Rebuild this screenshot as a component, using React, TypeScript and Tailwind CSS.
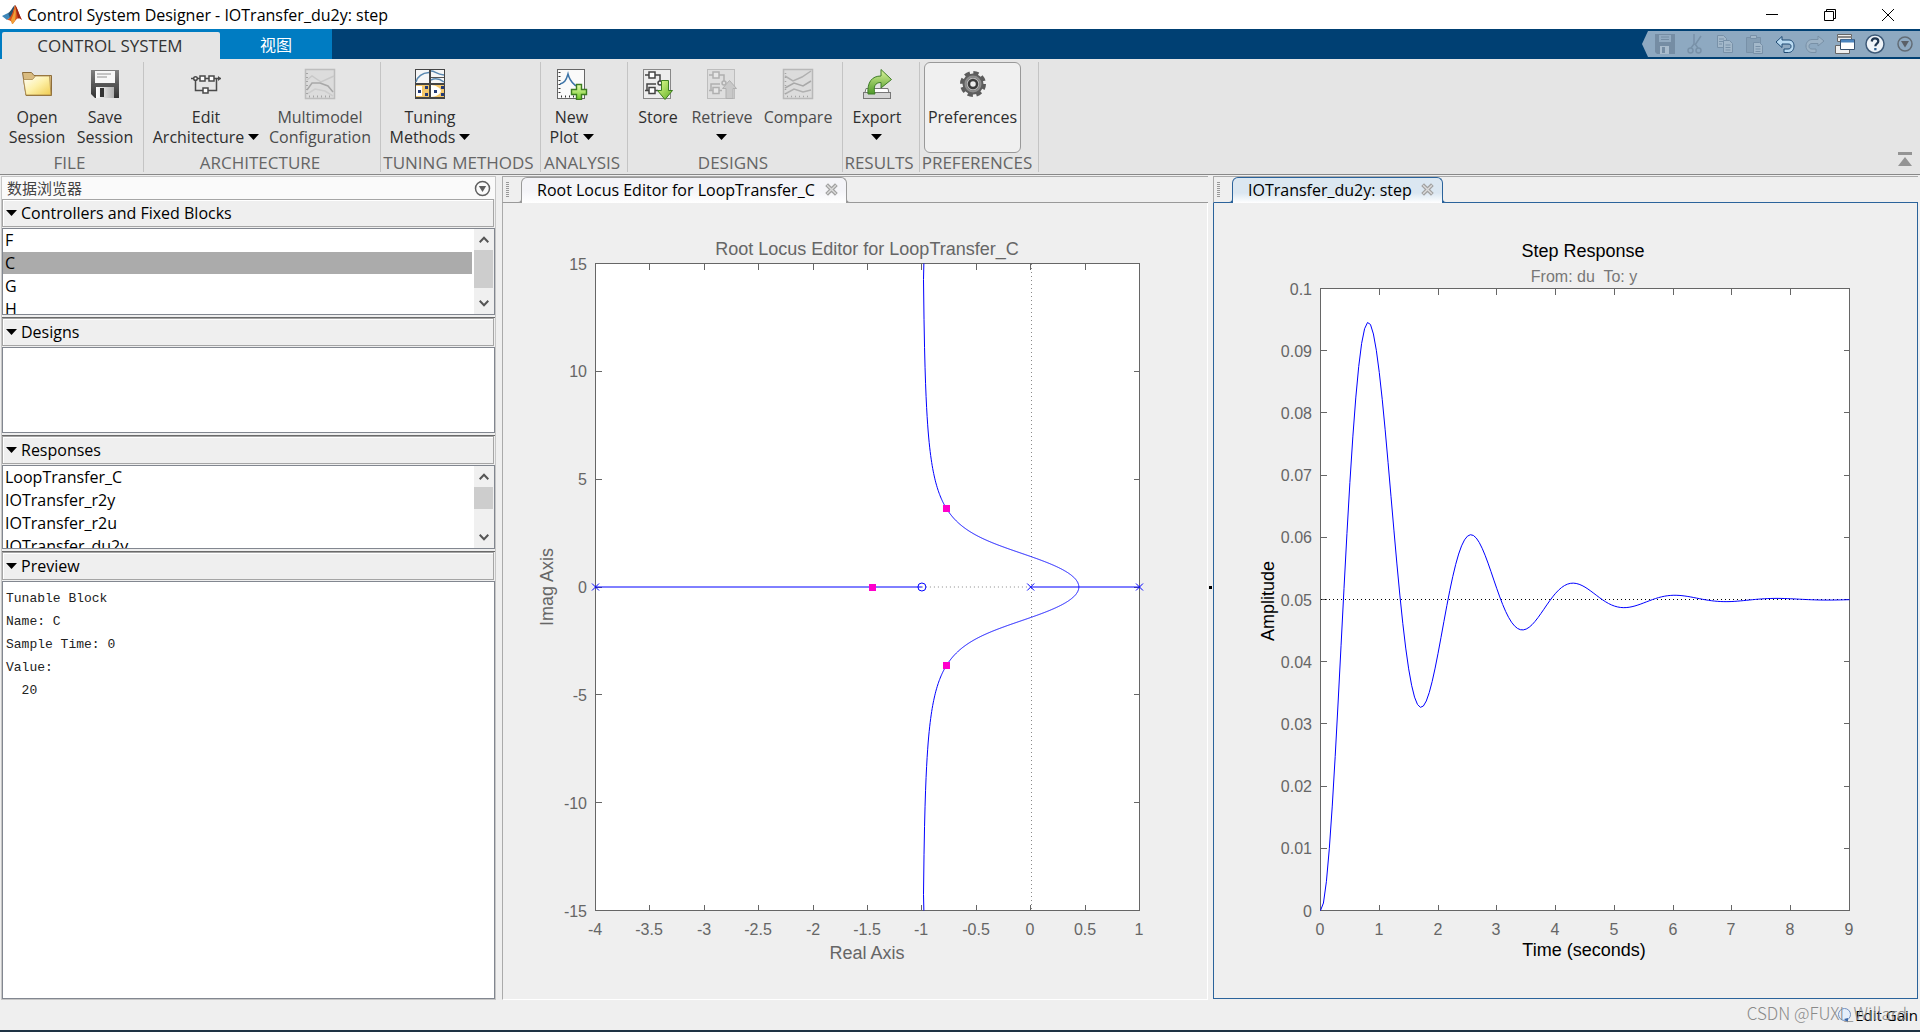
import React from 'react';

/* ---------- ribbon icons ---------- */

const FolderIcon = () => (
  <svg width="32" height="32" viewBox="0 0 32 32">
    <defs>
      <linearGradient id="folder" x1="0" y1="0" x2="1" y2="1">
        <stop offset="0" stopColor="#ffffff" />
        <stop offset="0.5" stopColor="#fdf0a8" />
        <stop offset="1" stopColor="#f0cc50" />
      </linearGradient>
    </defs>
    <path d="M1.500 4.500h9l2.500 3h17.500v20H5z" fill="#d9bb80" stroke="#8d6d3b" />
    <path d="M2.500 11.500h9l3-3.500h14l1.500 19H5z" fill="url(#folder)" stroke="#a8884a" strokeWidth="0.800" />
  </svg>
);

const DisketteIcon = () => (
  <svg width="32" height="32" viewBox="0 0 32 32">
    <defs>
      <linearGradient id="disk" x1="0" y1="0" x2="0" y2="1">
        <stop offset="0" stopColor="#808080" />
        <stop offset="1" stopColor="#333333" />
      </linearGradient>
      <linearGradient id="diskslot" x1="0" y1="0" x2="1" y2="0">
        <stop offset="0" stopColor="#ffffff" />
        <stop offset="1" stopColor="#b0b0b0" />
      </linearGradient>
    </defs>
    <path d="M2 2h28v28H6l-4-4z" fill="url(#disk)" />
    <rect x="6" y="3" width="20" height="12" fill="#f7f7f7" />
    <path d="M8 6h14M8 9h10" stroke="#909090" />
    <rect x="7" y="19" width="18" height="11" fill="url(#diskslot)" />
    <rect x="11" y="20" width="4" height="9" fill="#333" />
    <path d="M2 16.500h28" stroke="#555" />
  </svg>
);

const ArchitectureIcon = () => (
  <svg width="32" height="32" viewBox="0 0 32 32" fill="none" stroke="#4a4a4a" strokeWidth="1.500">
    <path d="M1 10.500h9M15 10.500h4M24 10.500h7M5.500 10.500v12h8M18 22.500h8.500v-12" />
    <rect x="10" y="8" width="5" height="5" fill="#fff" />
    <rect x="19" y="8" width="5" height="5" fill="#fff" />
    <rect x="13" y="20" width="5" height="5" fill="#fff" />
    <circle cx="5.500" cy="10.500" r="1.800" fill="#fff" />
    <path d="M28 8l3 2.500-3 2.500z" fill="#4a4a4a" stroke="none" />
  </svg>
);

const MultimodelIcon = () => (
  <svg width="32" height="32" viewBox="0 0 32 32" fill="none">
    <rect x="1.500" y="1.500" width="29" height="29" fill="#dcdcdc" stroke="#bdbdbd" strokeWidth="1.500" />
    <path d="M3 12l5-4 9 6 13-6" stroke="#c8c8c8" strokeWidth="1.500" />
    <path d="M3 22l5-7h8l8 3 5 6" stroke="#a8a8a8" strokeWidth="1.500" />
    <path d="M3 26l8-5 10 2 8 5" stroke="#cdcdcd" strokeWidth="1.500" />
    <path d="M5 28.500h24" stroke="#a5a5a5" strokeWidth="2" strokeDasharray="1 3" />
    <path d="M3 5v22" stroke="#a5a5a5" strokeWidth="2" strokeDasharray="1 3" />
  </svg>
);

const TuningIcon = () => (
  <svg width="32" height="32" viewBox="0 0 32 32" fill="none">
    <rect x="1" y="1" width="30" height="30" fill="#444" />
    <rect x="2" y="2" width="13" height="13" fill="#f6f6f6" />
    <rect x="17" y="2" width="13" height="13" fill="#f6f6f6" />
    <rect x="2" y="17" width="13" height="12" fill="#f4c76a" />
    <rect x="17" y="17" width="13" height="12" fill="#f4c76a" />
    <path d="M2 14C4 7 9 5 15 4.500" stroke="#5a88b0" strokeWidth="1.500" />
    <path d="M17 3c4 0 5 3 13 4M17 12c4-2 9-1 13 2" stroke="#5a88b0" strokeWidth="1.500" />
    <path d="M17 9.500h13" stroke="#555" />
    <rect x="2" y="18" width="6" height="10" fill="#fff" />
    <path d="M17 17c4 0 10 3 10 6s-6 6-10 6z" fill="#fff" />
    <path d="M4 22h3v3H4zM11 18h3v3h-3zM11 25h3v3h-3zM20 22h3v3h-3zM27 18h3v3h-3zM27 25h3v3h-3z" fill="#233b78" />
  </svg>
);

const NewPlotIcon = () => (
  <svg width="32" height="32" viewBox="0 0 32 32" fill="none">
    <defs>
      <linearGradient id="plus" x1="0" y1="0" x2="0" y2="1">
        <stop offset="0" stopColor="#e9ffb0" />
        <stop offset="1" stopColor="#70c828" />
      </linearGradient>
    </defs>
    <rect x="1.500" y="1.500" width="27" height="29" fill="#fafafa" stroke="#666" />
    <path d="M3.500 4v24M5 28.500h15" stroke="#333" strokeWidth="2" strokeDasharray="1 3" />
    <path d="M4 16c4-1 6-3 8-10 2 8 5 9 8 12" stroke="#3c74a8" strokeWidth="1.500" />
    <path d="M20.500 16.500h5v5h5v5h-5v5h-5v-5h-5v-5h5z" fill="url(#plus)" stroke="#3c7d20" strokeWidth="1.400" />
  </svg>
);

const DesignsIcon = ({ up = false }: { up?: boolean }) => {
  const ink = up ? '#b0b0b0' : '#444';
  return (
    <svg width="32" height="32" viewBox="0 0 32 32" fill="none">
      <defs>
        <linearGradient id="down" x1="0" y1="0" x2="1" y2="1">
          <stop offset="0" stopColor="#e2ff90" />
          <stop offset="1" stopColor="#5fae24" />
        </linearGradient>
      </defs>
      <rect x="1.500" y="1.500" width="27" height="29" fill={up ? '#dedede' : '#ededed'} stroke={up ? '#bdbdbd' : '#888'} />
      <g stroke={ink} strokeWidth="1.500">
        <path d="M3 7h4M13 7h5v6M3 22.500h4M13 22.500h3" />
        <rect x="7" y="4" width="6" height="6" fill={up ? '#e6e6e6' : '#fff'} />
        <rect x="7" y="19.500" width="6" height="6" fill={up ? '#e6e6e6' : '#fff'} />
        <circle cx="18" cy="15" r="2" />
        <path d="M5 22v-6h9" />
      </g>
      {up ? (
        <path d="M23.500 12.500l7 8h-3.500v10h-7v-10h-3.500z" fill="#c9c9c9" stroke="#b0b0b0" />
      ) : (
        <path d="M19.500 12.500h7v10h4l-7.500 9-7.500-9h4z" fill="url(#down)" stroke="#3c7d20" />
      )}
    </svg>
  );
};

const CompareIcon = () => (
  <svg width="32" height="32" viewBox="0 0 32 32" fill="none">
    <rect x="1.500" y="1.500" width="29" height="29" fill="#dcdcdc" stroke="#b8b8b8" strokeWidth="1.500" />
    <path d="M3 8l8 5 9-4 9-6" stroke="#b0b0b0" strokeWidth="1.500" />
    <path d="M3 20l9-5 9 3 8-5" stroke="#a8a8a8" strokeWidth="1.500" />
    <path d="M3 26l9-5 9 3 8-2" stroke="#b0b0b0" strokeWidth="1.500" />
    <path d="M5 28.500h24M3.500 5v22" stroke="#a5a5a5" strokeWidth="1.500" strokeDasharray="1 3" />
  </svg>
);

const ExportIcon = () => (
  <svg width="32" height="32" viewBox="0 0 32 32" fill="none">
    <defs>
      <linearGradient id="export" x1="0" y1="0" x2="0" y2="1">
        <stop offset="0" stopColor="#dcf59c" />
        <stop offset="1" stopColor="#4e9a28" />
      </linearGradient>
    </defs>
    <path d="M5 20.500h22l2 10H2.500z" fill="#ffffff" stroke="#777" />
    <rect x="2.500" y="24.500" width="27" height="6" fill="#d4d4d4" stroke="#777" />
    <path d="M7 26C6 14 11 8 20 8V1.500l10.500 10L20 20v-5.500c-6 0-8 4-6 11.500z" fill="url(#export)" stroke="#3f7d28" />
  </svg>
);

const GearIcon = () => (
  <svg width="32" height="32" viewBox="0 0 32 32" fill="none">
    <circle cx="16" cy="16" r="11" stroke="#5c5c5c" strokeWidth="4" strokeDasharray="5.200 3.440" />
    <circle cx="16" cy="16" r="8.500" fill="#b9b9b9" stroke="#5e5e5e" strokeWidth="4" />
    <circle cx="16" cy="16" r="7.500" stroke="#8d8d8d" strokeWidth="2" />
    <circle cx="16" cy="16" r="4" fill="#ececec" stroke="#3c3c3c" strokeWidth="2.500" />
  </svg>
);

/* ---------- small glyphs ---------- */

const Caret = () => (
  <svg width="11" height="6" viewBox="0 0 11 6" className="shrink-0">
    <path d="M0 0h11L5.500 6z" fill="#000" />
  </svg>
);

const CircleDown = ({ color }: { color: string }) => (
  <svg width="17" height="17" viewBox="0 0 17 17" fill="none">
    <circle cx="8.500" cy="8.500" r="7" stroke={color} strokeWidth="1.500" />
    <path d="M4.800 6h7.400l-3.700 6z" fill={color} />
  </svg>
);

const MatlabLogo = () => (
  <svg width="20" height="20" viewBox="0 0 20 20">
    <path d="M0 11l6-3 3 4-4 3z" fill="#3d86b8" />
    <path d="M6 8c3-1 4-6 7-8l-3 12-2 1z" fill="#27506e" />
    <path d="M13 0c2 2 4 9 7 15-3-3-5-2-7 1-1 1-2 3-3 3 0-3-2-4-5-4 5-3 6-9 8-15z" fill="#d9521c" />
    <path d="M13 0c0 6-2 10-4 15l1 4c1 0 2-2 3-3 1-6 1-11 0-16z" fill="#f0a038" />
    <path d="M13 0c2 2 4 9 7 15-2-2-3-2-4-1.500C15 9 14 4 13 0z" fill="#9c2516" />
  </svg>
);

/* ---------- ribbon ---------- */

type Tool = { label: string[]; icon: React.ReactNode; width: string; menu?: boolean; dim?: boolean; active?: boolean };
type Group = { title: string; width: string; inset?: string; tools: Tool[] };

const groups: Group[] = [
  {
    title: 'FILE',
    width: 'w-36',
    inset: 'pl-[3px]',
    tools: [
      { label: ['Open', 'Session'], icon: <FolderIcon />, width: 'w-[68px]' },
      { label: ['Save', 'Session'], icon: <DisketteIcon />, width: 'w-[68px]' },
    ],
  },
  {
    title: 'ARCHITECTURE',
    width: 'w-[237px]',
    inset: 'pl-[5px]',
    tools: [
      { label: ['Edit', 'Architecture'], icon: <ArchitectureIcon />, width: 'w-[114px]', menu: true },
      { label: ['Multimodel', 'Configuration'], icon: <MultimodelIcon />, width: 'w-[114px]', dim: true },
    ],
  },
  {
    title: 'TUNING METHODS',
    width: 'w-40',
    tools: [{ label: ['Tuning', 'Methods'], icon: <TuningIcon />, width: 'w-[98px]', menu: true }],
  },
  {
    title: 'ANALYSIS',
    width: 'w-[87px]',
    tools: [{ label: ['New', 'Plot'], icon: <NewPlotIcon />, width: 'w-[61px]', menu: true }],
  },
  {
    title: 'DESIGNS',
    width: 'w-[215px]',
    tools: [
      { label: ['Store'], icon: <DesignsIcon />, width: 'w-[60px]' },
      { label: ['Retrieve', ''], icon: <DesignsIcon up />, width: 'w-[68px]', menu: true, dim: true },
      { label: ['Compare'], icon: <CompareIcon />, width: 'w-[84px]', dim: true },
    ],
  },
  {
    title: 'RESULTS',
    width: 'w-[77px]',
    tools: [{ label: ['Export', ''], icon: <ExportIcon />, width: 'w-[68px]', menu: true }],
  },
  {
    title: 'PREFERENCES',
    width: 'w-[119px]',
    inset: 'pl-1',
    tools: [{ label: ['Preferences'], icon: <GearIcon />, width: 'w-[97px]', active: true }],
  },
];

const ToolButton = ({ tool }: { tool: Tool }) => (
  <button
    className={`flex h-[91px] shrink-0 flex-col items-center rounded-md border pt-[5px] text-base leading-5 ${tool.width} ${
      tool.active ? 'border-[#999] bg-[#f0f0f0]' : 'border-transparent'
    } ${tool.dim ? 'text-[#4c4c4c]' : 'text-[#2e2e2e]'}`}
  >
    {tool.icon}
    <span className="mt-[7px] flex flex-col items-center whitespace-nowrap">
      {tool.label.map((line, i) => (
        <span key={i} className="flex h-5 items-center gap-1">
          {line}
          {tool.menu && i === tool.label.length - 1 && <Caret />}
        </span>
      ))}
    </span>
  </button>
);

const Ribbon = () => (
  <div className="flex h-[116px] shrink-0 border-b border-[#888] bg-[#e5e5e5] pt-[3px] pb-0.5">
    {groups.map((g) => (
      <section key={g.title} className={`flex shrink-0 flex-col border-r border-[#c4c4c4] ${g.width}`} aria-label={g.title}>
        <div className={`flex ${g.inset ?? ''}`}>
          {g.tools.map((t) => (
            <ToolButton key={t.label[0] + t.label[1]} tool={t} />
          ))}
        </div>
        <h2 className="pr-1 text-center text-[17px] leading-5 whitespace-nowrap text-[#666]">{g.title}</h2>
      </section>
    ))}
    <button className="mt-auto mr-1.5 mb-1 ml-auto p-0.5" aria-label="Minimize toolstrip">
      <svg width="14" height="14" viewBox="0 0 14 14" fill="#949494">
        <path d="M0 0h14v3H0zM7 5l7 9H0z" />
      </svg>
    </button>
  </div>
);

/* ---------- quick access ---------- */

const quick: { name: string; icon: React.ReactNode }[] = [
  {
    name: 'Save',
    icon: (
      <g>
        <path d="M0 0h20v20H2l-2-2z" fill="#758da4" />
        <path d="M4 1h12v7H4z" fill="#93abc1" />
        <path d="M6 3h8M6 5.500h8" stroke="#758da4" />
        <path d="M5 12h9v8H5z" fill="#a9bccd" />
        <path d="M7 13h3v6H7z" fill="#758da4" />
      </g>
    ),
  },
  {
    name: 'Cut',
    icon: (
      <g stroke="#7891a8" strokeWidth="1.500">
        <path d="M9 0v10l-3 4M16 2l-6 9M10 10l3 4" />
        <circle cx="5.500" cy="16.500" r="2.500" />
        <circle cx="13.500" cy="16.500" r="2.500" />
      </g>
    ),
  },
  {
    name: 'Copy',
    icon: (
      <g fill="#a3b8ca" stroke="#7891a8">
        <path d="M2.500 1.500h6l3 3v9h-9z" />
        <path d="M4 5h5M4 7.500h5M4 10h3" />
        <path d="M8.500 6.500h6l3 3v9h-9z" />
        <path d="M10.500 11h5M10.500 13.500h5M10.500 16h5" />
      </g>
    ),
  },
  {
    name: 'Paste',
    icon: (
      <g fill="#869fb5" stroke="#7891a8">
        <path d="M1.500 3.500h14v15h-14z" />
        <path d="M5.500 1.500h6v3h-6z" fill="#a3b8ca" />
        <path d="M8.500 8.500h6l3 3v8h-9z" fill="#a3b8ca" />
        <path d="M10.500 12.500h5M10.500 15h5M10.500 17.500h5" />
      </g>
    ),
  },
  {
    name: 'Undo',
    icon: (
      <path
        d="M1 8l6-5.500V6h7c3 0 5 2.500 5 6s-2 6.500-5.500 6.500H9V15h4c2 0 3-1 3-2.700S15 10 13 10H7v3.500z"
        fill="#b9daf1"
        stroke="#1f4a73"
      />
    ),
  },
  {
    name: 'Redo',
    icon: (
      <path
        d="M19 7l-6-5v3.500H7C4 5.500 1 8 1 12s3 6.500 6 6.500h4V15H7c-2 0-3-1-3-2.700S5 9.500 7 9.500h6V12z"
        fill="#9db3c6"
        stroke="#7890a6"
      />
    ),
  },
  {
    name: 'Switch windows',
    icon: (
      <g stroke="#666">
        <path d="M2.500 .5h14v7h-14z" fill="#eee" />
        <path d="M.5 11.500h14v8H.5z" fill="#eee" />
        <path d="M2.500 3h14" stroke="#888" strokeWidth="2" />
        <path d="M5.500 5.500h14v10h-14z" fill="#fff" stroke="#36506e" />
        <path d="M6 7h13" stroke="#4b84bd" strokeWidth="3" />
      </g>
    ),
  },
  {
    name: 'Help',
    icon: (
      <g>
        <circle cx="10" cy="10" r="9" fill="#eef3f8" stroke="#3e5a78" strokeWidth="1.500" />
        <path d="M6.700 7.500C7 5 8.500 4.300 10 4.300c2 0 3.300 1.100 3.300 2.900 0 2.500-3 2.300-3 5" stroke="#1f3550" strokeWidth="2.200" />
        <path d="M9.200 14h2.300v2.300H9.200z" fill="#2d5f92" />
      </g>
    ),
  },
  {
    name: 'Toolbar options',
    icon: (
      <g>
        <circle cx="10" cy="10" r="7" stroke="#626c76" strokeWidth="1.500" />
        <path d="M6 7h8l-4 6.500z" fill="#5a6068" />
      </g>
    ),
  },
];

const TabStrip = () => (
  <div className="flex h-[30px] shrink-0 items-stretch bg-[#004073]" role="tablist">
    <div className="flex w-[332px] items-end bg-[#007cc2] pl-0.5">
      <button
        role="tab"
        aria-selected="true"
        className="h-[27px] w-[218px] rounded-t-xs bg-[#e5e5e5] pr-0.5 text-center text-[17px] leading-[27px] text-[#333]"
      >
        CONTROL SYSTEM
      </button>
      <button role="tab" aria-selected="false" className="h-[27px] flex-1 text-center text-base leading-[27px] text-white">
        视图
      </button>
    </div>
    <div className="my-0.5 ml-auto flex bg-[#8ea9c1] pl-2 [clip-path:polygon(6px_0,100%_0,100%_100%,6px_100%,0_50%)]">
      {quick.map((q) => (
        <button key={q.name} aria-label={q.name} className="flex w-[30px] items-center justify-center">
          <svg width="20" height="20" viewBox="0 0 20 20" fill="none">
            {q.icon}
          </svg>
        </button>
      ))}
    </div>
  </div>
);

const TitleBar = () => (
  <header className="flex h-[29px] shrink-0 items-center bg-white pr-[3px] pl-0.5">
    <MatlabLogo />
    <h1 className="ml-[5px] text-base leading-5 text-black">Control System Designer - IOTransfer_du2y: step</h1>
    <div className="ml-auto flex h-full">
      <button aria-label="Minimize" className="flex w-[58px] items-center justify-center">
        <svg width="12" height="12" viewBox="0 0 12 12" stroke="#000" fill="none">
          <path d="M0 5.500h12" />
        </svg>
      </button>
      <button aria-label="Restore" className="flex w-[58px] items-center justify-center">
        <svg width="12" height="12" viewBox="0 0 12 12" stroke="#000" fill="none">
          <path d="M.5 2.500h9v9h-9zM2.500 2.500v-2h9v9h-2" />
        </svg>
      </button>
      <button aria-label="Close" className="flex w-[58px] items-center justify-center">
        <svg width="12" height="12" viewBox="0 0 12 12" stroke="#000" fill="none">
          <path d="M0 0l12 12M12 0L0 12" />
        </svg>
      </button>
    </div>
  </header>
);

/* ---------- data browser ---------- */

const Chevron = ({ down = false }: { down?: boolean }) => (
  <svg width="10" height="7" viewBox="0 0 10 7" fill="none" stroke="#555" strokeWidth="2">
    <path d={down ? 'M.7 .8L5 5.200 9.300 .8' : 'M.7 6.200L5 1.800l4.300 4.400'} />
  </svg>
);

const ScrollBar = ({ thumb }: { thumb: string }) => (
  <div className="ml-0.5 flex w-5 shrink-0 flex-col bg-[#f0f0f0]">
    <button aria-label="Scroll up" className="flex h-[21px] shrink-0 items-center justify-center">
      <Chevron />
    </button>
    <div className={`mr-px bg-[#cdcdcd] ${thumb}`} />
    <button aria-label="Scroll down" className="mt-auto flex h-[21px] shrink-0 items-center justify-center">
      <Chevron down />
    </button>
  </div>
);

const SectionHeader = ({ title }: { title: string }) => (
  <button className="mr-px flex h-7 shrink-0 items-center gap-1 border border-[#a5a5a5] bg-[#efefef] pl-[3px] text-left text-base leading-5 text-black shadow-[inset_1px_1px_0_#fff]">
    <Caret />
    {title}
  </button>
);

const Divider = () => <div className="mt-0.5 h-px shrink-0 bg-[#6a6a6a]" />;

const ItemList = ({ items, selected, label, thumb, height }: { items: string[]; selected?: string; label: string; thumb?: string; height: string }) => (
  <div className={`mt-px flex shrink-0 overflow-hidden border border-[#828790] bg-white ${height}`}>
    <ul role="listbox" aria-label={label} className="min-w-0 flex-1 text-base leading-[23px] text-black">
      {items.map((it) => (
        <li
          key={it}
          role="option"
          aria-selected={it === selected}
          className={`h-[23px] pl-0.5 ${it === selected ? 'border-b border-white bg-[#ababab]' : ''}`}
        >
          {it}
        </li>
      ))}
    </ul>
    {thumb && <ScrollBar thumb={thumb} />}
  </div>
);

const DataBrowser = () => (
  <aside className="ml-px flex w-[495px] shrink-0 flex-col border border-[#c6c6c6]">
    <div className="flex h-[22px] shrink-0 items-center justify-between bg-[#fafafa] pr-1 pl-[5px]">
      <h2 className="text-[15px] leading-5 text-[#444]">数据浏览器</h2>
      <button aria-label="Panel options">
        <CircleDown color="#5f5f5f" />
      </button>
    </div>
    <SectionHeader title="Controllers and Fixed Blocks" />
    <ItemList label="Controllers and Fixed Blocks" items={['F', 'C', 'G', 'H']} selected="C" thumb="h-[38px]" height="h-[87px]" />
    <Divider />
    <SectionHeader title="Designs" />
    <ItemList label="Designs" items={[]} height="h-[86px]" />
    <Divider />
    <SectionHeader title="Responses" />
    <ItemList
      label="Responses"
      items={['LoopTransfer_C', 'IOTransfer_r2y', 'IOTransfer_r2u', 'IOTransfer_du2y']}
      thumb="h-[22px]"
      height="h-[84px]"
    />
    <Divider />
    <SectionHeader title="Preview" />
    <pre className='mt-px flex-1 overflow-hidden border border-[#828790] bg-white pt-[5px] pl-[3px] font-["Liberation_Mono",monospace] text-[13px] leading-[23px] text-[#222]'>
      {'Tunable Block\nName: C\nSample Time: 0\nValue:\n  20'}
    </pre>
  </aside>
);

/* ---------- plots ---------- */

const AXIS = '#666666';
const plotFont = 'font-["Liberation_Sans",Arial,sans-serif]';

type Frame = { x0: number; x1: number; y0: number; y1: number; left: number; right: number; top: number; bottom: number };

const makeScale = (f: Frame) => ({
  sx: (v: number) => f.left + ((v - f.x0) / (f.x1 - f.x0)) * (f.right - f.left),
  sy: (v: number) => f.bottom - ((v - f.y0) / (f.y1 - f.y0)) * (f.bottom - f.top),
});

const Axes = ({ frame, xs, ys }: { frame: Frame; xs: number[]; ys: number[] }) => {
  const { sx, sy } = makeScale(frame);
  const { left, right, top, bottom } = frame;
  const snap = (n: number) => Math.floor(n) + 0.5;
  return (
    <g>
      <g stroke={AXIS} fill="none" shapeRendering="crispEdges">
        <rect x={left} y={top} width={right - left} height={bottom - top} />
        {xs.map((v) => (
          <path key={v} d={`M${snap(sx(v))} ${top}v6M${snap(sx(v))} ${bottom}v-6`} />
        ))}
        {ys.map((v) => (
          <path key={v} d={`M${left} ${snap(sy(v))}h6M${right} ${snap(sy(v))}h-6`} />
        ))}
      </g>
      <g fill={AXIS} fontSize="16">
        {xs.map((v) => (
          <text key={v} x={Math.floor(sx(v))} y={bottom + 24.5} textAnchor="middle">
            {v}
          </text>
        ))}
        {ys.map((v) => (
          <text key={v} x={left - 8.5} y={Math.round(sy(v)) + 6} textAnchor="end">
            {v}
          </text>
        ))}
      </g>
    </g>
  );
};

const toPath = (pts: [number, number][]) => 'M' + pts.map(([x, y]) => `${x.toFixed(2)} ${y.toFixed(2)}`).join('L');

const locusFrame: Frame = { x0: -4, x1: 1, y0: -15, y1: 15, left: 92.5, right: 636.5, top: 60.5, bottom: 707.5 };

/* Complex branch of 1 + K (s + 1) / (s (s - 1) (s + 4)) = 0, parametrised by its real part. */
const imagOf = (a: number) => Math.sqrt(Math.max(0, (4 - 6 * a - 4 * a * a) / (2 + 2 * a) - a * a));

const locusBranch = (() => {
  let lo = 0.3;
  let hi = 0.6;
  for (let i = 0; i < 50; i++) {
    const mid = (lo + hi) / 2;
    if (imagOf(mid) > 0) lo = mid;
    else hi = mid;
  }
  const pts: [number, number][] = [];
  const n = 600;
  for (let i = 0; i <= n; i++) {
    const u = i / n;
    const a = lo - (lo + 0.99) * u * u;
    const b = imagOf(a);
    if (b <= 15) pts.push([a, b]);
  }
  pts.push([-0.982, 15]);
  pts[0] = [lo, 0];
  return pts;
})();

const RootLocusPlot = () => {
  const { sx, sy } = makeScale(locusFrame);
  const upper = toPath(locusBranch.map(([a, b]) => [sx(a), sy(b)]));
  const lower = toPath(locusBranch.map(([a, b]) => [sx(a), sy(-b)]));
  const poles = [-4, 0, 1];
  const closed: [number, number][] = [
    [-1.46, 0],
    [-0.774, 3.65],
    [-0.774, -3.63],
  ];
  return (
    <svg viewBox="0 0 704 796" className={`block h-full w-full ${plotFont}`} role="img" aria-label="Root Locus Editor for LoopTransfer_C">
      <rect x="92" y="60" width="545" height="648" fill="#fff" />
      <path d={`M528.500 61V707M${sx(-1)} 384H528`} stroke="#8a8a8a" strokeDasharray="1 3" fill="none" />
      <Axes frame={locusFrame} xs={[-4, -3.5, -3, -2.5, -2, -1.5, -1, -0.5, 0, 0.5, 1]} ys={[-15, -10, -5, 0, 5, 10, 15]} />
      <g stroke="#0000ff" fill="none">
        <path d={upper} />
        <path d={lower} />
        <path d={`M${sx(-4)} 384H${sx(-1)}M${sx(0)} 384H${sx(1)}`} />
        {poles.map((p) => (
          <path key={p} d={`M${sx(p) - 3.5} 380.500l7 7m0 -7l-7 7`} />
        ))}
        <circle cx={sx(-1)} cy="384" r="4" />
      </g>
      {closed.map(([a, b]) => (
        <rect key={`${a},${b}`} x={Math.round(sx(a)) - 3} y={Math.round(sy(b)) - 3} width="7" height="7" fill="#ff00cc" />
      ))}
      <g fill={AXIS} fontSize="18" textAnchor="middle">
        <text x="364" y="52">
          Root Locus Editor for LoopTransfer_C
        </text>
        <text x="364" y="756">
          Real Axis
        </text>
        <text transform="translate(50 384) rotate(-90)">Imag Axis</text>
      </g>
    </svg>
  );
};

const stepFrame: Frame = { x0: 0, x1: 9, y0: 0, y1: 0.1, left: 106.5, right: 635.5, top: 85.5, bottom: 707.5 };

/* Unit step response of (s + 1) / (s^3 + 3 s^2 + 16 s + 20), in controllable form. */
const stepResponse = (() => {
  const f = ([x1, x2, x3]: number[]) => [x2, x3, 1 - 20 * x1 - 16 * x2 - 3 * x3];
  const add = (a: number[], b: number[], k: number) => a.map((v, i) => v + k * b[i]);
  const h = 0.01;
  let x = [0, 0, 0];
  const pts: [number, number][] = [[0, 0]];
  for (let i = 1; i <= 900; i++) {
    const k1 = f(x);
    const k2 = f(add(x, k1, h / 2));
    const k3 = f(add(x, k2, h / 2));
    const k4 = f(add(x, k3, h));
    x = x.map((v, j) => v + (h / 6) * (k1[j] + 2 * k2[j] + 2 * k3[j] + k4[j]));
    if (i % 5 === 0) pts.push([i * h, x[0] + x[1]]);
  }
  return pts;
})();

const StepPlot = () => {
  const { sx, sy } = makeScale(stepFrame);
  return (
    <svg viewBox="0 0 703 795" className={`block h-full w-full ${plotFont}`} role="img" aria-label="Step Response">
      <rect x="106" y="85" width="530" height="623" fill="#fff" />
      <Axes frame={stepFrame} xs={[0, 1, 2, 3, 4, 5, 6, 7, 8, 9]} ys={[0, 0.01, 0.02, 0.03, 0.04, 0.05, 0.06, 0.07, 0.08, 0.09, 0.1]} />
      <path d="M107 396.500H635" stroke="#000" strokeDasharray="1 3" />
      <path d={toPath(stepResponse.map(([t, y]) => [sx(t), sy(y)]))} stroke="#0000ff" fill="none" />
      <g fontSize="18" textAnchor="middle" fill="#000">
        <text x="369" y="54">
          Step Response
        </text>
        <text x="370" y="753">
          Time (seconds)
        </text>
        <text transform="translate(60 398) rotate(-90)">Amplitude</text>
        <text x="370" y="79" fontSize="16" fill="#777" className="whitespace-pre">
          {'From: du  To: y'}
        </text>
      </g>
    </svg>
  );
};

const CloseGlyph = () => (
  <svg width="13" height="13" viewBox="0 0 12 12" fill="none">
    <path d="M1.500 1.500l9 9M10.500 1.500l-9 9" stroke="#a2a2a2" strokeWidth="3.600" />
    <path d="M2 2l8 8M10 2l-8 8" stroke="#dcdcdc" strokeWidth="1.200" />
  </svg>
);

const PlotPane = ({ title, focused = false, tabWidth, children }: { title: string; focused?: boolean; tabWidth: string; children: React.ReactNode }) => {
  const line = focused ? 'border-[#2b639b]' : 'border-[#999]';
  return (
    <section className="flex min-h-0 min-w-0 flex-col border-t border-[#aaa]">
      <div className={`relative flex h-[26px] shrink-0 items-end border-b border-l border-l-[#aaa] bg-[#efefef] ${focused ? 'border-b-[#2b639b]' : 'border-b-[#999]'}`}>
        <div className="mr-3 mb-1 ml-[3px] h-4 w-[3px] bg-[repeating-linear-gradient(#999_0_1px,transparent_1px_2px)]" />
        <div
          className={`relative -mb-px flex h-[26px] items-center justify-between rounded-t-md border border-b-0 bg-linear-to-b pr-2 pb-0.5 pl-[15px] ${line} ${tabWidth} ${
            focused ? 'from-[#dbe7f1] from-60% to-white' : 'from-[#f4f4f8] from-50% to-white'
          }`}
        >
          <span className={`absolute bottom-0 -left-[5px] size-[5px] rounded-br-[4px] border-r border-b bg-[#efefef] ${line}`} />
          <span className={`absolute -right-[5px] bottom-0 size-[5px] rounded-bl-[4px] border-b border-l bg-[#efefef] ${line}`} />
          <button role="tab" aria-selected={focused} className="text-base leading-5 whitespace-nowrap text-black">
            {title}
          </button>
          <button aria-label={`Close ${title}`}>
            <CloseGlyph />
          </button>
        </div>
      </div>
      <div
        className={`min-h-0 flex-1 border-l ${
          focused ? 'mb-px border-r border-b border-[#2b639b]' : 'border-r border-b border-r-white border-b-white border-l-[#aaa]'
        }`}
      >
        {children}
      </div>
    </section>
  );
};

const StatusBar = () => (
  <footer className="relative flex h-8 shrink-0 items-center justify-end gap-1 border-b-2 border-[#1e3244] pr-0.5">
    <svg width="13" height="15" viewBox="0 0 13 15">
      <circle cx="6.500" cy="6.500" r="6" fill="#e6effa" stroke="#6f8fc0" />
      <path d="M6 11l4 3.500V10z" fill="#3b68a8" />
    </svg>
    <span className="text-[15px] leading-5 text-black">Edit Gain</span>
    <span className='absolute top-px right-[13px] font-["Noto_Sans_CJK_SC",sans-serif] text-[17px] leading-6 font-light text-[#8a8a8a]'>
      CSDN @FUXI_Willard
    </span>
  </footer>
);

export default function App() {
  return (
    <div className='flex h-screen flex-col overflow-hidden bg-[#efefef] font-["Open_Sans","Noto_Sans_CJK_SC",sans-serif]'>
      <TitleBar />
      <TabStrip />
      <Ribbon />
      <main className="flex min-h-0 flex-1 pt-px pr-0.5">
        <DataBrowser />
        <div className="ml-1.5 grid min-h-0 min-w-0 flex-1 grid-cols-[706fr_5px_705fr]">
          <PlotPane title="Root Locus Editor for LoopTransfer_C" tabWidth="w-[326px]">
            <RootLocusPlot />
          </PlotPane>
          <div className="flex items-center justify-center pb-0.5">
            <div className="size-[3px] bg-black" />
          </div>
          <PlotPane title="IOTransfer_du2y: step" focused tabWidth="w-[211px]">
            <StepPlot />
          </PlotPane>
        </div>
      </main>
      <StatusBar />
    </div>
  );
}
